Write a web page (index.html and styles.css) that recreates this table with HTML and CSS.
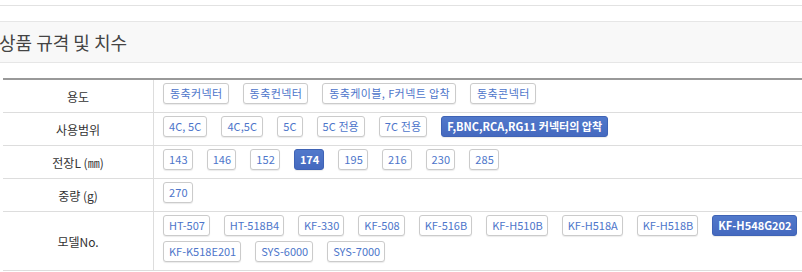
FILE: index.html
```html
<!DOCTYPE html>
<html>
	<head>
		<meta charset="UTF-8">
		<title>상품 규격 및 치수</title>
		<link rel="stylesheet" href="styles.css">
	</head>
	<body>
		<div class="top_line"></div>
		<h3 class="spec_title">상품 규격 및 치수</h3>
		<table class="spec" border="0" cellspacing="0" cellpadding="0">
			<tr>
				<th>용도</th>
				<td>
					<div class="opts">
						<a class="opt ko">동축커넥터</a>
						<a class="opt ko">동축컨넥터</a>
						<a class="opt ko">동축케이블, F커넥트 압착</a>
						<a class="opt ko">동축콘넥터</a>
					</div>
				</td>
			</tr>
			<tr>
				<th>사용범위</th>
				<td>
					<div class="opts">
						<a class="opt">4C, 5C</a>
						<a class="opt">4C,5C</a>
						<a class="opt">5C</a>
						<a class="opt">5C 전용</a>
						<a class="opt">7C 전용</a>
						<a class="opt on">F,BNC,RCA,RG11 커넥터의 압착</a>
					</div>
				</td>
			</tr>
			<tr>
				<th>전장L (㎜)</th>
				<td>
					<div class="opts nums">
						<a class="opt">143</a>
						<a class="opt">146</a>
						<a class="opt">152</a>
						<a class="opt on">174</a>
						<a class="opt">195</a>
						<a class="opt">216</a>
						<a class="opt">230</a>
						<a class="opt">285</a>
					</div>
				</td>
			</tr>
			<tr>
				<th>중량 (g)</th>
				<td>
					<div class="opts nums">
						<a class="opt">270</a>
					</div>
				</td>
			</tr>
			<tr>
				<th>모델No.</th>
				<td>
					<div class="opts models">
						<a class="opt">HT-507</a>
						<a class="opt">HT-518B4</a>
						<a class="opt">KF-330</a>
						<a class="opt">KF-508</a>
						<a class="opt">KF-516B</a>
						<a class="opt">KF-H510B</a>
						<a class="opt">KF-H518A</a>
						<a class="opt">KF-H518B</a>
						<a class="opt on">KF-H548G202</a>
						<a class="opt">KF-K518E201</a>
						<a class="opt">SYS-6000</a>
						<a class="opt">SYS-7000</a>
					</div>
				</td>
			</tr>
		</table>
	</body>
</html>
```

FILE: styles.css
```css
body {
	margin: 0;
	padding: 0;
	font-family: "Noto Sans CJK KR", "Noto Sans", sans-serif;
	font-size: 12px;
	color: #333;
	background: #fff;
	overflow: hidden;
}

.top_line {
	height: 0;
	margin-top: 5px;
	border-top: 1px solid #e2e2e2;
}

.spec_title {
	margin: 15px 0 0 0;
	height: 40px;
	line-height: 40px;
	background: #f8f8f8;
	border-top: 1px solid #e6e6e6;
	border-bottom: 1px solid #e6e6e6;
	font-size: 18px;
	font-weight: normal;
	color: #444;
	text-indent: -1px;
	white-space: nowrap;
}

.spec {
	margin: 15px 0 0 3px;
	width: 799px;
	border-top: 2px solid #999;
	border-collapse: collapse;
}

.spec th {
	width: 150px;
	font-weight: normal;
	font-size: 12px;
	color: #333;
	text-align: center;
	border-bottom: 1px solid #ddd;
	border-right: 1px solid #ddd;
	padding: 0;
}

.spec td {
	border-bottom: 1px solid #ddd;
	padding: 3px 0 8px 9px;
}

.opts {
	display: flex;
	flex-wrap: wrap;
	gap: 5px 14px;
}

.opt {
	display: block;
	height: 19px;
	line-height: 19px;
	padding: 0 5px;
	border: 1px solid #cbcbcb;
	border-radius: 3px;
	background: #fff;
	box-shadow: 0 1px 1px rgba(0, 0, 0, 0.08);
	font-size: 11px;
	color: #4d75ca;
	white-space: nowrap;
	letter-spacing: 0.1px;
}

/* 한글 버튼은 글자 간격을 조금 넓게 */
.opt.ko {
	letter-spacing: 0.4px;
	padding: 0 5px 0 6px;
}

.nums .opt {
	padding: 0 4px 0 5px;
}

.models .opt {
	padding: 0 4px 0 5px;
	letter-spacing: 0;
}

.opt.on {
	background: linear-gradient(#5179cb, #4569bf);
	border-color: #3f63b5;
	color: #fff;
	font-weight: bold;
	letter-spacing: 0;
}
```
